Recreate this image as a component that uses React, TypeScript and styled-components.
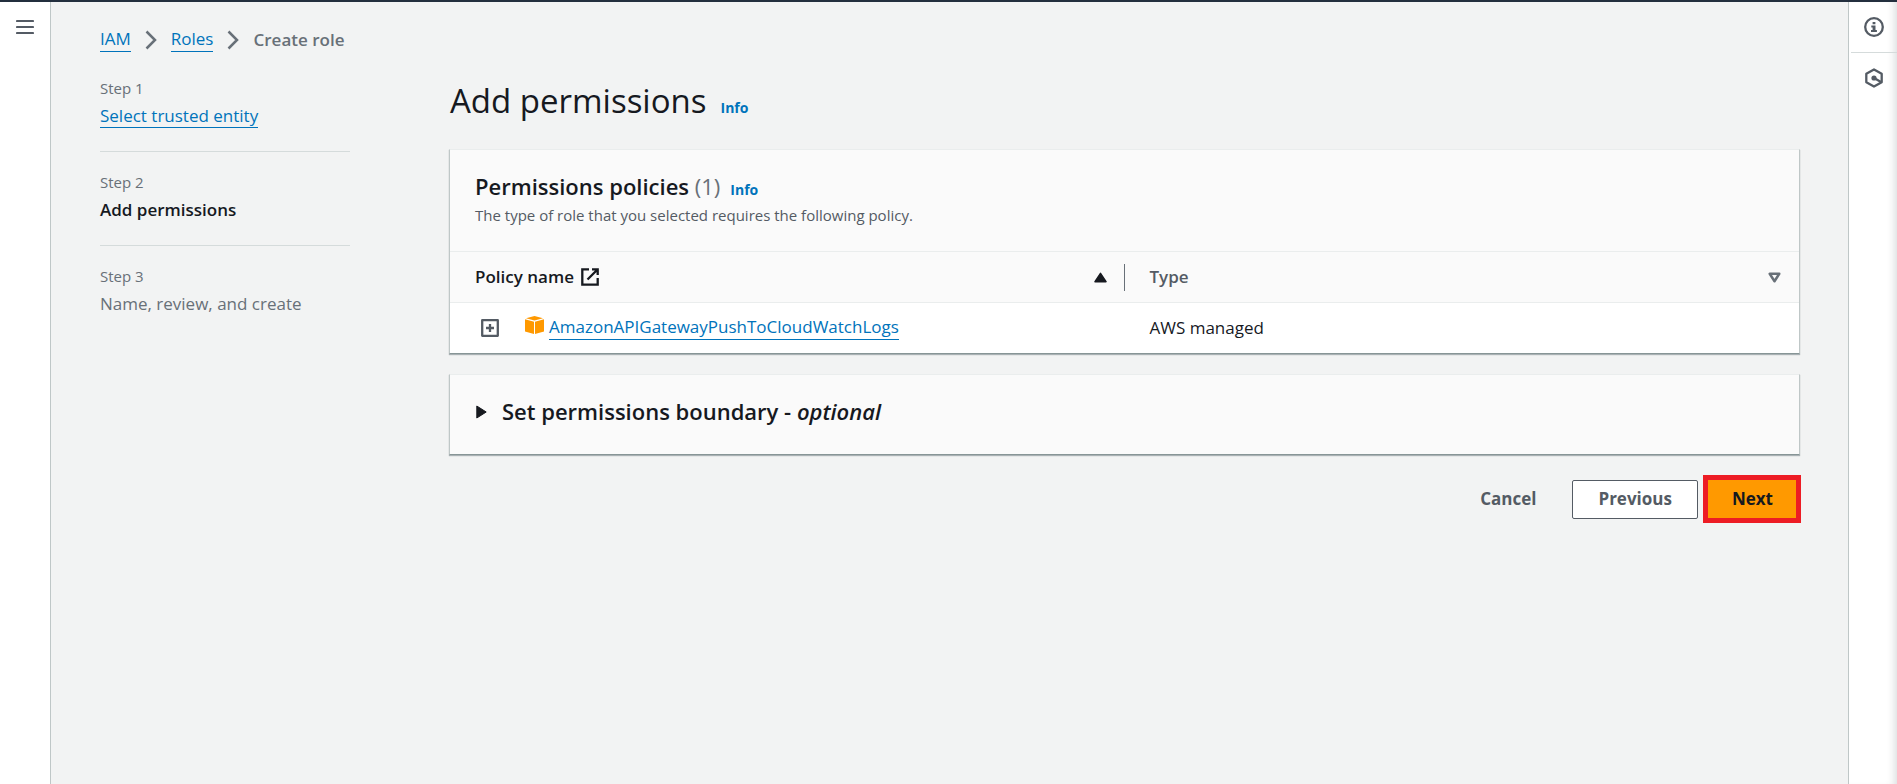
import React from 'react';
import styled, { createGlobalStyle, css } from 'styled-components';

const color = {
  text: '#16191f',
  secondary: '#545b64',
  muted: '#687078',
  link: '#0073bb',
  page: '#f2f3f3',
  header: '#fafafa',
  divider: '#eaeded',
  line: '#d5dbdb',
  edge: '#bfc7c7',
};

const GlobalStyle = createGlobalStyle`
  *, *::before, *::after { box-sizing: border-box; }
  body {
    margin: 0;
    background: ${color.page};
    color: ${color.text};
    font-family: 'Open Sans', 'Noto Sans', sans-serif;
    font-size: 17px;
    line-height: 24px;
  }
  h1, h2, p, ol { margin: 0; padding: 0; }
  ol { list-style: none; }
  button { font: inherit; color: inherit; cursor: pointer; }
  svg { display: block; flex: none; }
`;

const Shell = styled.div`
  display: flex;
  min-height: 100vh;
  border-top: 2px solid #232f3e;
`;

const SideRail = styled.aside<{ $side: 'left' | 'right' }>`
  flex: none;
  background: #fff;
  color: ${color.secondary};
  ${({ $side }) =>
    $side === 'left'
      ? css`
          width: 51px;
          border-right: 1px solid ${color.edge};
        `
      : css`
          width: 49px;
          padding-left: 2px;
          border-left: 1px solid ${color.edge};
          box-shadow: inset -8px 0 8px -6px rgba(0, 28, 36, 0.16);
        `}
`;

const RailButton = styled.button<{ $divided?: boolean }>`
  display: flex;
  align-items: center;
  justify-content: center;
  width: 100%;
  height: 51px;
  padding: 0;
  border: 0;
  border-bottom: 1px solid ${({ $divided }) => ($divided ? color.line : 'transparent')};
  background: transparent;
`;

const Content = styled.div`
  flex: 1;
  min-width: 0;
  padding: 25px 48px 40px 49px;
`;

const Breadcrumbs = styled.nav`
  ol {
    display: flex;
    align-items: center;
    gap: 14px;
  }
  li {
    display: flex;
    align-items: center;
    gap: 14px;
    color: ${color.muted};
  }
  li[aria-current] {
    font-weight: 600;
  }
`;

const Link = styled.a`
  color: ${color.link};
  text-decoration: none;
  border-bottom: 1px solid currentColor;
`;

const InfoLink = styled.a`
  color: ${color.link};
  font-size: 14px;
  font-weight: 700;
  text-decoration: none;
`;

const Wizard = styled.div`
  display: grid;
  grid-template-columns: 250px minmax(0, 1fr);
  column-gap: 99px;
`;

const Step = styled.li`
  padding: 20px 0 23px;
  border-bottom: 1px solid ${color.line};
  &:first-child { padding-top: 26px; }
  &:last-child { border-bottom: 0; }
`;

const StepLabel = styled.div`
  margin-bottom: 6px;
  color: ${color.muted};
  font-size: 15px;
  line-height: 20px;
`;

const StepTitle = styled.div<{ $active?: boolean }>`
  color: ${({ $active }) => ($active ? color.text : color.muted)};
  font-weight: ${({ $active }) => ($active ? 600 : 400)};
`;

const Main = styled.main`
  padding-top: 27px;
`;

const TitleRow = styled.div`
  display: flex;
  align-items: baseline;
  gap: 14px;
  margin-bottom: 26px;
  padding-left: 1px;
`;

const PageTitle = styled.h1`
  font-size: 33px;
  font-weight: 400;
  line-height: 44px;
`;

const Card = styled.section`
  margin-bottom: 20px;
  background: ${color.header};
  border: 1px solid ${color.divider};
  border-color: ${color.divider} ${color.edge} #879596;
  box-shadow: 0 1px 1px rgba(0, 28, 36, 0.3);
`;

const CardHeader = styled.header`
  padding: 22px 25px;
`;

const CardTitleRow = styled.div`
  display: flex;
  align-items: baseline;
  gap: 10px;
`;

const CardTitle = styled.h2`
  font-size: 22px;
  font-weight: 600;
  line-height: 28px;
`;

const Counter = styled.span`
  color: ${color.muted};
  font-weight: 400;
`;

const Description = styled.p`
  color: ${color.secondary};
  font-size: 15px;
  line-height: 27px;
`;

const PolicyTable = styled.table`
  width: 100%;
  table-layout: fixed;
  border-collapse: separate;
  border-spacing: 0;
  text-align: left;
`;

const HeadCell = styled.th<{ $sorted?: boolean }>`
  height: 52px;
  padding: 0;
  border: solid ${color.divider};
  border-width: 1px 0;
  color: ${({ $sorted }) => ($sorted ? color.text : color.secondary)};
  font-weight: 600;
`;

const SortButton = styled.button<{ $divided?: boolean }>`
  display: flex;
  align-items: center;
  justify-content: space-between;
  width: 100%;
  height: 27px;
  padding: 0 17px 0 25px;
  border: 0;
  border-right: 1px solid ${({ $divided }) => ($divided ? color.muted : 'transparent')};
  background: transparent;
  font-weight: 600;
`;

const HeadLabel = styled.span`
  display: flex;
  align-items: center;
  gap: 7px;
`;

const Cell = styled.td`
  height: 50px;
  padding: 0 25px 1px;
  background: #fff;
`;

const PolicyName = styled.div`
  display: flex;
  align-items: center;
`;

const ExpandButton = styled.button`
  margin: 0 26px 0 6px;
  padding: 0;
  border: 0;
  background: transparent;
  color: ${color.secondary};
`;

const ServiceIcon = styled.span`
  margin-right: 5px;
  padding-bottom: 6px;
`;

const BoundaryToggle = styled.button`
  display: flex;
  align-items: center;
  gap: 15px;
  width: 100%;
  padding: 22px 25px 29px 26px;
  border: 0;
  background: transparent;
  text-align: left;
`;

const Actions = styled.div`
  display: flex;
  align-items: center;
  justify-content: flex-end;
`;

const Button = styled.button<{ $variant: 'link' | 'normal' | 'primary' }>`
  height: 39px;
  font-weight: 700;
  ${({ $variant }) =>
    $variant === 'link' &&
    css`
      margin-right: 10px;
      padding: 0 25px;
      border: 1px solid transparent;
      background: transparent;
      color: ${color.secondary};
    `}
  ${({ $variant }) =>
    $variant === 'normal' &&
    css`
      margin-right: 5px;
      padding: 0 25px;
      border: 1px solid ${color.secondary};
      border-radius: 2px;
      background: #fff;
      color: ${color.secondary};
    `}
  ${({ $variant }) =>
    $variant === 'primary' &&
    css`
      height: 48px;
      margin-right: -1px;
      padding: 0 23px 0 24px;
      border: 5px solid #ed1c24;
      background: #ff9900;
      color: ${color.text};
    `}
`;

const MenuIcon = () => (
  <svg width="18" height="16" viewBox="0 0 18 16" fill="none" stroke="currentColor" strokeWidth="2.200" strokeLinecap="round" aria-hidden="true">
    <path d="M1 2h16M1 8h16M1 14h16" />
  </svg>
);

const ChevronIcon = () => (
  <svg width="12" height="20" viewBox="0 0 12 20" fill="none" stroke="currentColor" strokeWidth="2.5" aria-hidden="true">
    <path d="M1.500 1.500 10 10l-8.500 8.500" />
  </svg>
);

const InfoIcon = () => (
  <svg width="20" height="20" viewBox="0 0 20 20" aria-hidden="true">
    <circle cx="10" cy="10" r="8.800" fill="none" stroke="currentColor" strokeWidth="2.300" />
    <path fill="currentColor" d="M8.600 5h2.800v2.200H8.600zM7.300 8.500h4.200v4.500h1.400v2H7v-2h1.600v-2.500H7.300z" />
  </svg>
);

const HexagonIcon = () => (
  <svg width="20" height="20" viewBox="0 0 20 20" fill="none" stroke="currentColor" strokeWidth="2.300" strokeLinejoin="round" aria-hidden="true">
    <path d="M10 1.500 17.700 5.800v8.400L10 18.500l-7.700-4.300V5.800z" />
    <circle cx="10" cy="10" r="2.600" fill="currentColor" stroke="none" />
    <path d="m10 10 7 4" />
  </svg>
);

const ExternalIcon = () => (
  <svg width="18" height="18" viewBox="0 0 18 18" fill="none" stroke="currentColor" strokeWidth="2.300" aria-hidden="true">
    <path d="M8 1.300H1.300v15.400h15.400V10M11 1.300h5.700V7M16.500 1.500 6.500 11.500" />
  </svg>
);

const SortAscendingIcon = () => (
  <svg width="13" height="11" viewBox="0 0 13 11" fill="currentColor" stroke="currentColor" strokeWidth="1.500" strokeLinejoin="round" aria-hidden="true">
    <path d="M6.500 1.300 12 9.700H1z" />
  </svg>
);

const SortIcon = () => (
  <svg width="13" height="11" viewBox="0 0 13 11" fill="none" stroke={color.muted} strokeWidth="2.500" strokeLinejoin="round" aria-hidden="true">
    <path d="M1.700 1.800h9.600L6.500 9.200z" />
  </svg>
);

const ExpandIcon = () => (
  <svg width="18" height="18" viewBox="0 0 18 18" fill="none" stroke="currentColor" strokeWidth="2.300" strokeLinejoin="round" aria-hidden="true">
    <path d="M1.200 1.200h15.600v15.600H1.200zM9 5v8M5 9h8" />
  </svg>
);

const CubeIcon = () => (
  <svg width="19" height="18" viewBox="0 0 19 18" fill="#ff9900" aria-hidden="true">
    <path d="M9.500 0 18 2.200 9.500 4.600 1 2.200zM0 3.200l9 2.500V18l-9-2.600zM19 3.200l-9 2.500V18l9-2.600z" />
  </svg>
);

const CaretIcon = () => (
  <svg width="11" height="16" viewBox="0 0 11 16" fill="currentColor" stroke="currentColor" strokeWidth="1" strokeLinejoin="round" aria-hidden="true">
    <path d="M.800 3 10.200 9 .800 15z" />
  </svg>
);

export default function App() {
  return (
    <>
      <GlobalStyle />
      <Shell>
        <SideRail $side="left">
          <RailButton aria-label="Open navigation">
            <MenuIcon />
          </RailButton>
        </SideRail>

        <Content>
          <Breadcrumbs aria-label="Breadcrumbs">
            <ol>
              <li><Link href="#iam">IAM</Link><ChevronIcon /></li>
              <li><Link href="#roles">Roles</Link><ChevronIcon /></li>
              <li aria-current="page">Create role</li>
            </ol>
          </Breadcrumbs>

          <Wizard>
            <nav aria-label="Steps">
              <ol>
                <Step>
                  <StepLabel>Step 1</StepLabel>
                  <StepTitle><Link href="#trusted-entity">Select trusted entity</Link></StepTitle>
                </Step>
                <Step aria-current="step">
                  <StepLabel>Step 2</StepLabel>
                  <StepTitle $active>Add permissions</StepTitle>
                </Step>
                <Step>
                  <StepLabel>Step 3</StepLabel>
                  <StepTitle>Name, review, and create</StepTitle>
                </Step>
              </ol>
            </nav>

            <Main>
              <TitleRow>
                <PageTitle>Add permissions</PageTitle>
                <InfoLink href="#info">Info</InfoLink>
              </TitleRow>

              <Card>
                <CardHeader>
                  <CardTitleRow>
                    <CardTitle>Permissions policies <Counter>(1)</Counter></CardTitle>
                    <InfoLink href="#policies-info">Info</InfoLink>
                  </CardTitleRow>
                  <Description>The type of role that you selected requires the following policy.</Description>
                </CardHeader>
                <PolicyTable>
                  <thead>
                    <tr>
                      <HeadCell scope="col" $sorted aria-sort="ascending">
                        <SortButton $divided>
                          <HeadLabel>Policy name <ExternalIcon /></HeadLabel>
                          <SortAscendingIcon />
                        </SortButton>
                      </HeadCell>
                      <HeadCell scope="col">
                        <SortButton>
                          <HeadLabel>Type</HeadLabel>
                          <SortIcon />
                        </SortButton>
                      </HeadCell>
                    </tr>
                  </thead>
                  <tbody>
                    <tr>
                      <Cell>
                        <PolicyName>
                          <ExpandButton aria-label="Expand policy"><ExpandIcon /></ExpandButton>
                          <ServiceIcon><CubeIcon /></ServiceIcon>
                          <Link href="#policy">AmazonAPIGatewayPushToCloudWatchLogs</Link>
                        </PolicyName>
                      </Cell>
                      <Cell>AWS managed</Cell>
                    </tr>
                  </tbody>
                </PolicyTable>
              </Card>

              <Card>
                <BoundaryToggle aria-expanded="false">
                  <CaretIcon />
                  <CardTitle as="span">Set permissions boundary - <i>optional</i></CardTitle>
                </BoundaryToggle>
              </Card>

              <Actions>
                <Button $variant="link">Cancel</Button>
                <Button $variant="normal">Previous</Button>
                <Button $variant="primary">Next</Button>
              </Actions>
            </Main>
          </Wizard>
        </Content>

        <SideRail $side="right">
          <RailButton $divided aria-label="Info panel"><InfoIcon /></RailButton>
          <RailButton aria-label="Tutorials"><HexagonIcon /></RailButton>
        </SideRail>
      </Shell>
    </>
  );
}
